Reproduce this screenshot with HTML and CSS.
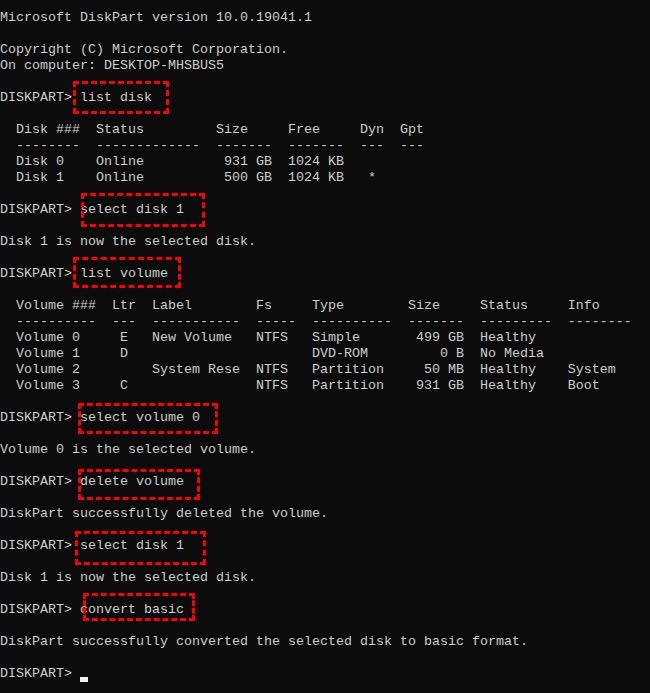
FILE: index.html
```html
<!DOCTYPE html>
<html lang="en">
<head>
<meta charset="utf-8">
<title>DiskPart</title>
<link rel="stylesheet" href="styles.css">
</head>
<body>
<main class="console">
<pre class="screen">Microsoft DiskPart version 10.0.19041.1

Copyright (C) Microsoft Corporation.
On computer: DESKTOP-MHSBUS5

DISKPART&gt; <span class="cmd">list disk<span class="mark m1"></span></span>

  Disk ###  Status         Size     Free     Dyn  Gpt
  --------  -------------  -------  -------  ---  ---
  Disk 0    Online          931 GB  1024 KB
  Disk 1    Online          500 GB  1024 KB   *

DISKPART&gt; <span class="cmd">select disk 1<span class="mark m2"></span></span>

Disk 1 is now the selected disk.

DISKPART&gt; <span class="cmd">list volume<span class="mark m3"></span></span>

  Volume ###  Ltr  Label        Fs     Type        Size     Status     Info
  ----------  ---  -----------  -----  ----------  -------  ---------  --------
  Volume 0     E   New Volume   NTFS   Simple       499 GB  Healthy
  Volume 1     D                       DVD-ROM         0 B  No Media
  Volume 2         System Rese  NTFS   Partition     50 MB  Healthy    System
  Volume 3     C                NTFS   Partition    931 GB  Healthy    Boot

DISKPART&gt; <span class="cmd">select volume 0<span class="mark m4"></span></span>

Volume 0 is the selected volume.

DISKPART&gt; <span class="cmd">delete volume<span class="mark m5"></span></span>

DiskPart successfully deleted the volume.

DISKPART&gt; <span class="cmd">select disk 1<span class="mark m6"></span></span>

Disk 1 is now the selected disk.

DISKPART&gt; <span class="cmd">convert basic<span class="mark m7"></span></span>

DiskPart successfully converted the selected disk to basic format.

DISKPART&gt; <span class="cursor"> </span></pre>
</main>
</body>
</html>
```

FILE: styles.css
```css
html, body {
  margin: 0;
  padding: 0;
  background: #0c0c0c;
}

body {
  min-height: 100vh;
}

.console {
  padding: 10px 0 0 0;
}

.screen {
  margin: 0;
  color: #cccccc;
  font-family: "Liberation Mono", "DejaVu Sans Mono", monospace;
  font-size: 13.333px;
  line-height: 16px;
  white-space: pre;
}

.cmd {
  position: relative;
  display: inline-block;
  line-height: 16px;
  height: 16px;
  vertical-align: top;
}

.mark {
  position: absolute;
  box-sizing: border-box;
  border: 3px dashed #f00;
}

.m1 { left: -7px; top: -9px; width: 96px; height: 33px; }
.m2 { left: 1px;  top: -9px; width: 124px; height: 34px; }
.m3 { left: -7px; top: -9px; width: 108px; height: 31px; }
.m4 { left: -2px; top: -7px; width: 140px; height: 31px; }
.m5 { left: -2px; top: -5px; width: 122px; height: 31px; }
.m6 { left: -5px; top: -7px; width: 131px; height: 34px; }
.m7 { left: 3px;  top: -9px; width: 112px; height: 28px; }

.cursor {
  display: inline-block;
  width: 8px;
  height: 16px;
  vertical-align: top;
  background: linear-gradient(to bottom, transparent 11px, #f2f2f2 11px, #f2f2f2 14px);
}
```
